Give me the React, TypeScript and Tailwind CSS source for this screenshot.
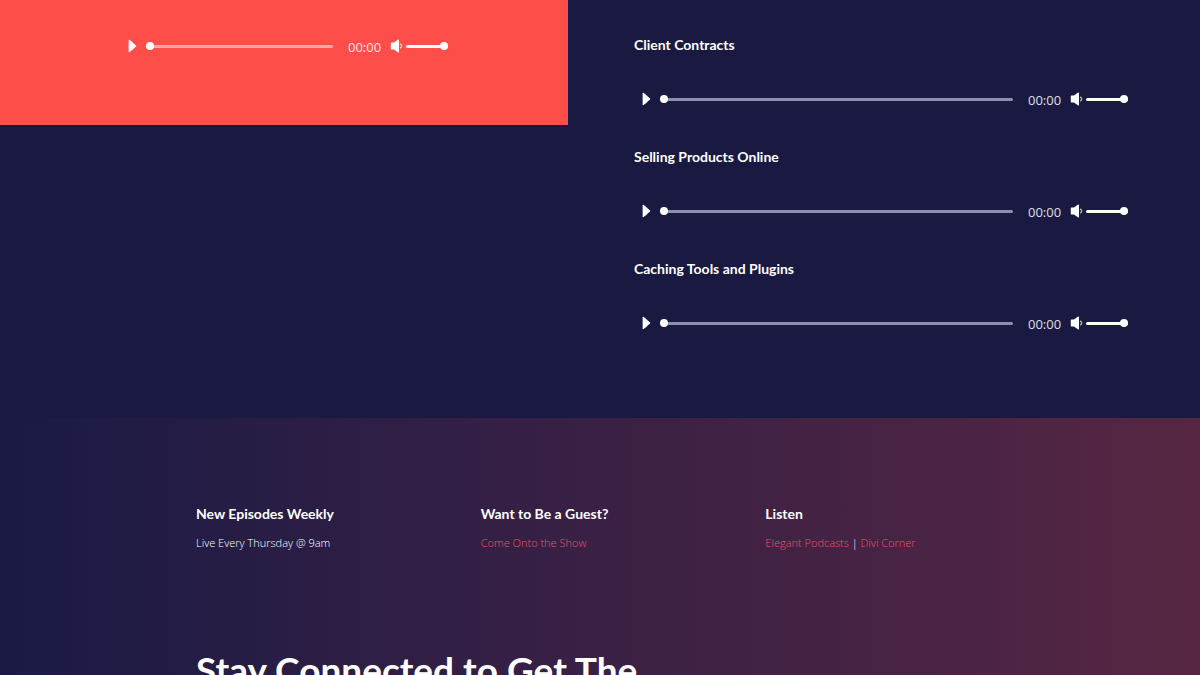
import { useState } from "react";

const episodes = ["Client Contracts", "Selling Products Online", "Caching Tools and Plugins"];

const sliderBase =
  "block h-2 cursor-pointer appearance-none bg-transparent [&::-webkit-slider-runnable-track]:h-[3px] [&::-webkit-slider-runnable-track]:rounded-full [&::-webkit-slider-thumb]:-mt-[3px] [&::-webkit-slider-thumb]:size-2 [&::-webkit-slider-thumb]:appearance-none [&::-webkit-slider-thumb]:rounded-full [&::-webkit-slider-thumb]:bg-white";

function Player({ label, tint }: { label: string; tint: string }) {
  const [position, setPosition] = useState(0);
  const [volume, setVolume] = useState(100);
  return (
    <div className="flex h-5 items-center text-white">
      <button type="button" aria-label={`Play ${label}`} className="mr-2 w-[10px] shrink-0 cursor-pointer">
        <svg viewBox="0 0 10 14" className="h-[14px] w-[10px]" fill="currentColor" aria-hidden="true">
          <path d="M.6 1.2Q.6.5 1.3.8Q2.6 1.4 8 6.4Q8.6 7 8 7.6Q2.6 12.6 1.3 13.2Q.6 13.5 .6 12.8Z" />
        </svg>
      </button>
      <input
        type="range"
        min={0}
        max={100}
        value={position}
        onChange={(e) => setPosition(Number(e.target.value))}
        aria-label={`Position in ${label}`}
        className={`${sliderBase} ${tint} min-w-0 flex-1`}
      />
      <span className="mt-px ml-[15px] w-[34px] shrink-0 text-[13px] leading-5 text-white/85">00:00</span>
      <button type="button" aria-label={`Mute ${label}`} className="mr-0.5 ml-2 w-[14px] shrink-0 cursor-pointer">
        <svg viewBox="0 0 14 14" className="size-[14px]" aria-hidden="true">
          <path d="M.8 4.2Q.8 3.4 1.6 3.4H4L7.8.7Q9 0 9 1V13Q9 14 7.8 13.3L4 10.6H1.6Q.8 10.6 .8 9.8Z" fill="currentColor" />
          <path d="M10 4.8A2.3 2.3 0 0 1 10 9.2" fill="none" stroke="currentColor" strokeOpacity=".65" strokeWidth="1.4" />
        </svg>
      </button>
      <input
        type="range"
        min={0}
        max={100}
        value={volume}
        onChange={(e) => setVolume(Number(e.target.value))}
        aria-label={`Volume of ${label}`}
        className={`${sliderBase} w-[42px] shrink-0 [&::-webkit-slider-runnable-track]:bg-white`}
      />
    </div>
  );
}

export default function App() {
  const link = "text-[#ee5062] hover:underline";
  const title = "font-['Lato',sans-serif] text-[14px] leading-5 font-bold";
  return (
    <main className="flex h-screen flex-col overflow-hidden bg-[#191942] font-['Open_Sans',sans-serif] text-white">
      <section className="grid shrink-0 grid-cols-[568fr_632fr] items-start pb-[85px]">
        <div className="bg-[#fd4e4a] pt-9 pr-[120px] pb-[69px] pl-32">
          <Player label="featured episode" tint="[&::-webkit-slider-runnable-track]:bg-[#fea6a4]" />
        </div>
        <ul className="flex flex-col gap-[38px] pt-[35px] pr-[72px] pl-[66px]">
          {episodes.map((name) => (
            <li key={name}>
              <h3 className={title}>{name}</h3>
              <div className="mt-[34px] pl-2">
                <Player label={name} tint="[&::-webkit-slider-runnable-track]:bg-[#8f8db0]" />
              </div>
            </li>
          ))}
        </ul>
      </section>

      <section className="grow bg-linear-to-r from-[#191a44] via-[#3a2045] to-[#562642] px-[196px] pt-[86px]">
        <div className="grid grid-cols-3 gap-[46px] text-[11px] leading-5 font-light">
          <div>
            <h4 className={title}>New Episodes Weekly</h4>
            <p className="mt-[9px]">Live Every Thursday @ 9am</p>
          </div>
          <div>
            <h4 className={title}>Want to Be a Guest?</h4>
            <p className="mt-[9px]">
              <a href="#guest" className={link}>Come Onto the Show</a>
            </p>
          </div>
          <div>
            <h4 className={title}>Listen</h4>
            <p className="mt-[9px]">
              <a href="#podcasts" className={link}>Elegant Podcasts</a> |{" "}
              <a href="#corner" className={link}>Divi Corner</a>
            </p>
          </div>
        </div>
        <h2 className="mt-[93px] font-['Lato',sans-serif] text-[37px] leading-[48px] font-bold">Stay Connected to Get The</h2>
      </section>
    </main>
  );
}
